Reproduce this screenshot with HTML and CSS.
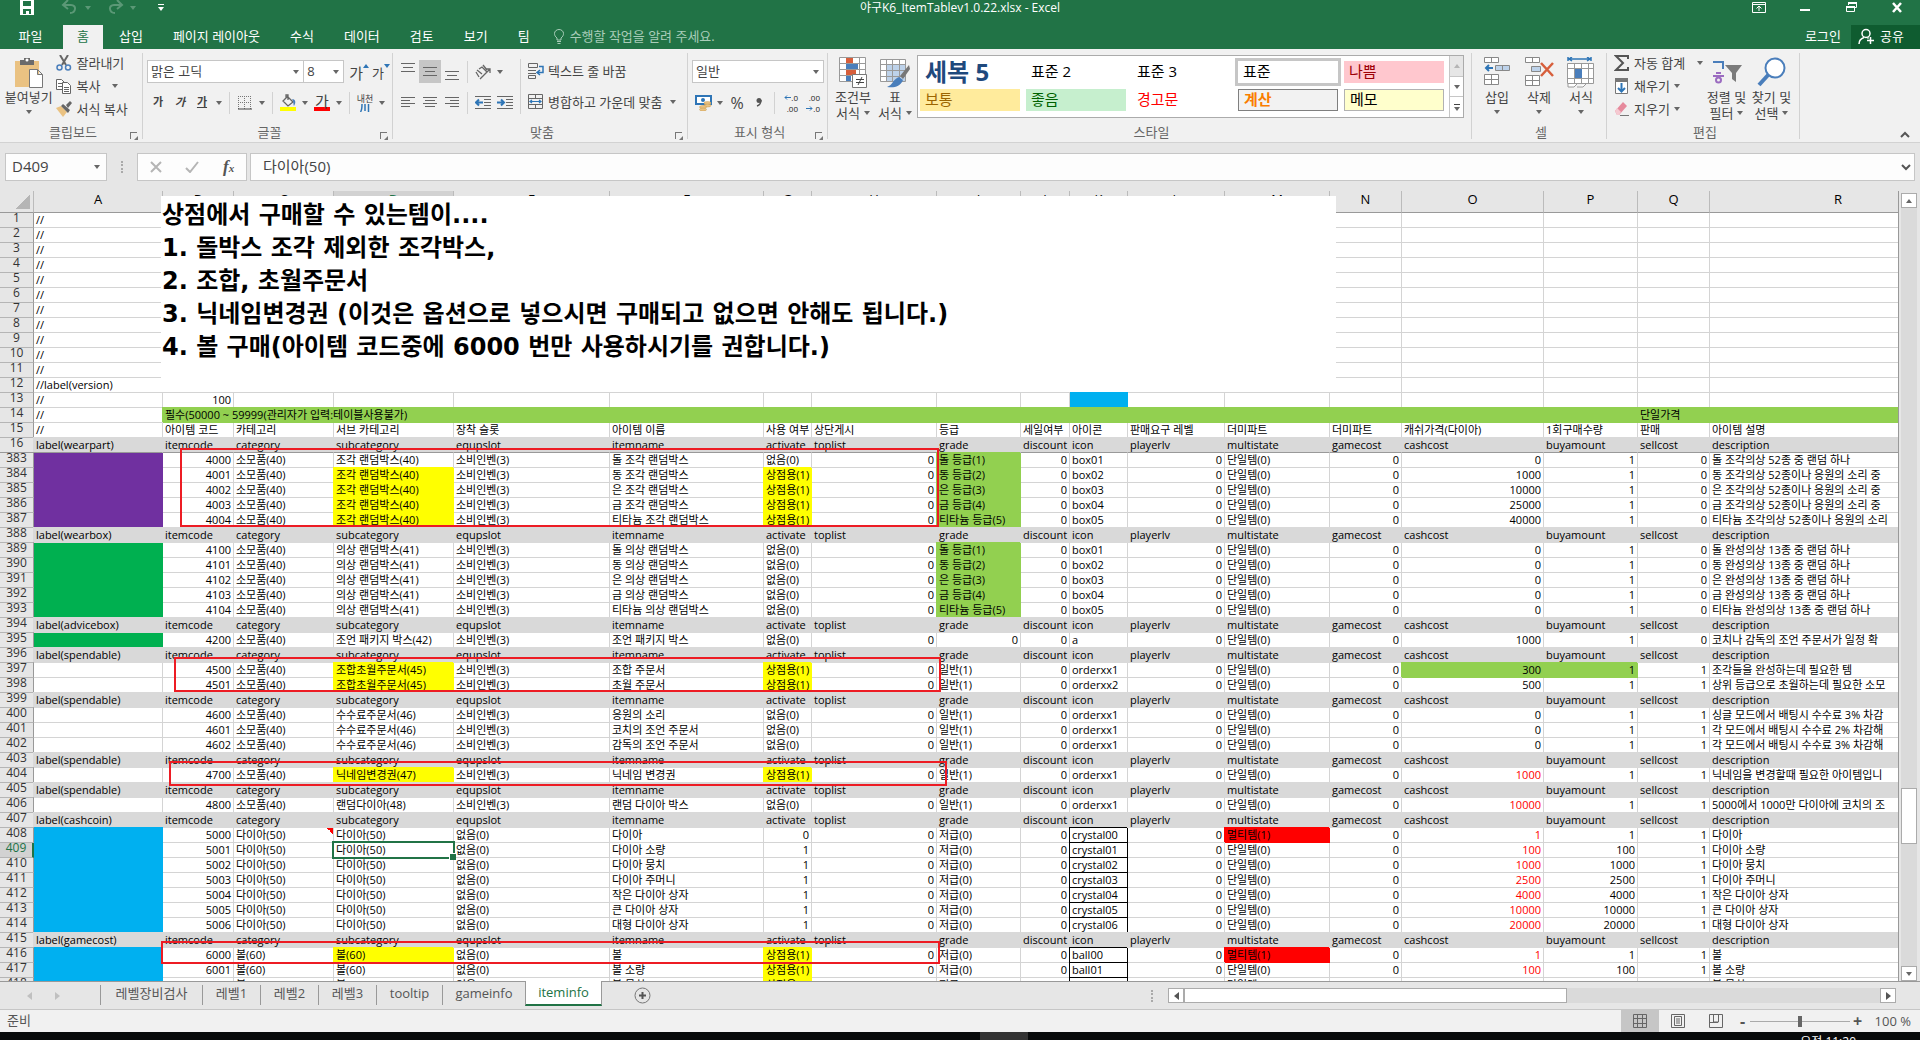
FILE: index.html
```html
<!DOCTYPE html>
<html lang="ko">
<head>
<meta charset="utf-8">
<title>야구K6_ItemTablev1.0.22.xlsx - Excel</title>
<link rel="stylesheet" href="styles.css">
</head>
<body>
<div class="app">
<header class="titlebar">
  <div class="quick">
    <button class="tb-btn" aria-label="저장"><svg width="16" height="16" viewBox="0 0 16 16"><path fill="#fff" d="M1 0h14v15H1z"/><path fill="#217346" d="M4 1h8v5H4zM4 9h8v5h-2v-3H7v3H4z"/></svg></button>
    <button class="tb-btn undo" aria-label="실행 취소"><svg width="18" height="16" viewBox="0 0 18 16" fill="none" stroke="#5b9876" stroke-width="2"><path d="M7 0L2 5l5 4M2 5h8c6 0 5 8-1 8"/></svg><span class="tri faint"></span></button>
    <button class="tb-btn undo" aria-label="다시 실행"><svg width="18" height="16" viewBox="0 0 18 16" fill="none" stroke="#5b9876" stroke-width="2"><path d="M11 0l5 5-5 4M16 5H8c-6 0-5 8 1 8"/></svg><span class="tri faint"></span></button>
    <button class="tb-btn custom" aria-label="빠른 실행 도구 모음 사용자 지정"><span class="bar"></span><span class="tri light"></span></button>
  </div>
  <div class="title">야구K6_ItemTablev1.0.22.xlsx - Excel</div>
  <div class="winbtns">
    <button class="tb-btn" aria-label="리본 표시 옵션"><svg width="14" height="12" viewBox="0 0 14 12" fill="none" stroke="#fff"><path d="M.5 1.500h13v10H.5zM.5 3.500h13M7 10V5M4.500 7.500L7 5l2.500 2.500"/></svg></button>
    <button class="tb-btn" aria-label="최소화"><svg width="14" height="12" viewBox="0 0 14 12"><path fill="#fff" d="M2 8h10v2H2z"/></svg></button>
    <button class="tb-btn" aria-label="이전 크기로 복원"><svg width="14" height="12" viewBox="0 0 14 12" fill="none" stroke="#fff"><path d="M4.500 4V1.500h8v5h-2M2.500 5.500h8v5h-8z"/><path stroke-width="2" d="M4 2h9M2 6h9"/></svg></button>
    <button class="tb-btn" aria-label="닫기"><svg width="14" height="12" viewBox="0 0 14 12" stroke="#fff" stroke-width="2.500"><path d="M3 2l8 9M11 2l-8 9"/></svg></button>
  </div>
</header>

<nav class="tabs">
  <button class="tab file">파일</button>
  <button class="tab active">홈</button>
  <button class="tab">삽입</button>
  <button class="tab">페이지 레이아웃</button>
  <button class="tab">수식</button>
  <button class="tab">데이터</button>
  <button class="tab">검토</button>
  <button class="tab">보기</button>
  <button class="tab">팀</button>
  <button class="tell"><svg width="10" height="15" viewBox="0 0 10 15" fill="none" stroke="#a9cdb9"><path d="M3 11V9C1 7.500.5 6 .5 4.500a4.500 4 0 0 1 9 0C9.500 6 9 7.500 7 9v2zM3 12.500h4M3.500 14.500h3"/></svg>수행할 작업을 알려 주세요.</button>
  <button class="login">로그인</button>
  <button class="share"><svg width="17" height="17" viewBox="0 0 17 17" fill="none" stroke="#fff" stroke-width="1.500"><circle cx="8" cy="5.500" r="4"/><path d="M1 16c0-4 2-5.500 5-6.500M9.500 9.500l1 1M12.500 9v7M9 12.500h7"/></svg>공유</button>
</nav>

<section class="ribbon">
  <div class="group g-clip">
    <div class="body">
      <button class="big paste"><svg width="30" height="31" viewBox="0 0 30 31"><path fill="#eac282" d="M1 4h24v26H1z"/><path fill="#6b6b6b" d="M6 3h4V1h6v2h4v5H6z"/><circle cx="13" cy="3" r="1.500" fill="#fff"/><path fill="#fff" stroke="#777" d="M15.500 12.500h8l5 5v13h-13zM23.500 12.500v5h5"/></svg><span>붙여넣기</span><span class="tri"></span></button>
      <div class="stack">
        <button class="line"><svg width="16" height="16" viewBox="0 0 16 16" fill="none" stroke-width="1.500"><path stroke="#666" stroke-width="2" d="M4 0l6 10M12 0L6 10"/><circle cx="3.500" cy="12.500" r="2.500" stroke="#4a7ebb"/><circle cx="12" cy="12.500" r="2.500" stroke="#4a7ebb"/></svg>잘라내기</button>
        <button class="line"><svg width="16" height="16" viewBox="0 0 16 16" fill="#fff" stroke="#666"><path d="M.5 1.500h5l3 3v7h-8zM2 5.500h4M2 8.500h4"/><path d="M6.500 4.500h5l3 3v8h-8zM8 9.500h5M8 11.500h5M8 13.500h5"/></svg>복사<span class="tri gap"></span></button>
        <button class="line"><svg width="16" height="16" viewBox="0 0 16 16"><path fill="#eac282" d="M0 7l5-2 6 6-4 5z"/><path fill="#666" d="M5 5l2-2 7 6-2 3zM10 4l4-4 2 2-4 5z"/></svg>서식 복사</button>
      </div>
    </div>
    <div class="caption">클립보드<button class="launch" aria-label="클립보드 설정"></button></div>
  </div>

  <div class="group g-font">
    <div class="body rows">
      <div class="row">
        <span class="pick font"><select aria-label="글꼴"><option>맑은 고딕</option></select></span>
        <span class="pick size"><select aria-label="글꼴 크기"><option>8</option></select></span>
        <button class="ic grow">가<svg width="6" height="4" viewBox="0 0 6 4"><path fill="#2e75b6" d="M0 4l3-4 3 4z"/></svg></button>
        <button class="ic shrink">가<svg width="6" height="4" viewBox="0 0 6 4"><path fill="#2e75b6" d="M0 0l3 4 3-4z"/></svg></button>
      </div>
      <div class="row">
        <button class="ic small"><b>가</b></button>
        <button class="ic small"><b><i>가</i></b></button>
        <button class="ic small"><b><u>가</u></b></button>
        <button class="ar" aria-label="밑줄 옵션"><span class="tri"></span></button><i class="sep"></i>
        <button class="ic" aria-label="테두리"><svg width="14" height="14" viewBox="0 0 14 14" fill="none" stroke="#777"><path stroke-dasharray="1 1" d="M.5 0v13M6.500 0v13M12.500 0v13M0 .5h13M0 6.500h13"/><path stroke="#444" d="M0 13h14"/></svg></button>
        <button class="ar" aria-label="테두리 옵션"><span class="tri"></span></button><i class="sep"></i>
        <button class="ic" aria-label="채우기 색"><svg width="17" height="17" viewBox="0 0 17 17"><path fill="none" stroke="#666" stroke-width="1.300" d="M7 2l6 6-5 4-5-5 5-5M6 5V1h2v5"/><path fill="#4a7ebb" d="M12 5c4 0 4 4 2 7-1-2 0-4-2-7z"/><path fill="#ff0" d="M0 13h16v4H0z"/></svg></button>
        <button class="ar" aria-label="채우기 색 옵션"><span class="tri"></span></button>
        <button class="ic fcolor">가</button>
        <button class="ar" aria-label="글꼴 색 옵션"><span class="tri"></span></button><i class="sep"></i>
        <button class="ic ruby"><span>내천</span><svg width="10" height="8" viewBox="0 0 10 8" stroke="#2e75b6" stroke-width="1.500" fill="none"><path d="M2 0c0 4 0 6-1.500 8M5 0v7M8.500 0v8"/></svg></button>
        <button class="ar" aria-label="윗주 옵션"><span class="tri"></span></button>
      </div>
    </div>
    <div class="caption">글꼴<button class="launch" aria-label="글꼴 설정"></button></div>
  </div>

  <div class="group g-align">
    <div class="body">
      <div class="rows">
        <div class="row">
          <button class="ic up" aria-label="위쪽 맞춤"><svg width="14" height="9" viewBox="0 0 14 9" stroke="#666"><path d="M0 .5h14M2 4.500h10M0 8.500h14"/></svg></button>
          <button class="ic on" aria-label="가운데 맞춤"><svg width="14" height="9" viewBox="0 0 14 9" stroke="#666"><path d="M0 .5h14M2 4.500h10M0 8.500h14"/></svg></button>
          <button class="ic down" aria-label="아래쪽 맞춤"><svg width="14" height="9" viewBox="0 0 14 9" stroke="#666"><path d="M0 .5h14M2 4.500h10M0 8.500h14"/></svg></button><i class="sep"></i>
          <button class="ic" aria-label="방향"><svg width="17" height="16" viewBox="0 0 17 16" fill="none" stroke="#666" stroke-width="1.300"><path d="M1 8l3 5M2 6l5 4M4 5l3-2 5 5M8 1l4 5M5 15L15 5M11 5h4v4"/></svg></button>
          <button class="ar" aria-label="방향 옵션"><span class="tri"></span></button>
        </div>
        <div class="row">
          <button class="ic" aria-label="왼쪽 맞춤"><svg width="14" height="11" viewBox="0 0 14 11" stroke="#666"><path d="M0 .5h14M0 3.500h9M0 6.500h14M0 9.500h9"/></svg></button>
          <button class="ic" aria-label="가로 가운데 맞춤"><svg width="14" height="11" viewBox="0 0 14 11" stroke="#666"><path d="M0 .5h14M2 3.500h10M0 6.500h14M2 9.500h10"/></svg></button>
          <button class="ic" aria-label="오른쪽 맞춤"><svg width="14" height="11" viewBox="0 0 14 11" stroke="#666"><path d="M0 .5h14M5 3.500h9M0 6.500h14M5 9.500h9"/></svg></button><i class="sep"></i>
          <button class="ic" aria-label="내어쓰기"><svg width="16" height="13" viewBox="0 0 16 13" fill="none" stroke="#666"><path d="M0 .5h16M9 3.500h7M9 6.500h7M9 9.500h7M0 12.500h16"/><path stroke="#2e75b6" stroke-width="2" d="M8 6.500H1M4 3.500l-3 3 3 3"/></svg></button>
          <button class="ic" aria-label="들여쓰기"><svg width="16" height="13" viewBox="0 0 16 13" fill="none" stroke="#666"><path d="M0 .5h16M9 3.500h7M9 6.500h7M9 9.500h7M0 12.500h16"/><path stroke="#2e75b6" stroke-width="2" d="M0 6.500h7M4 3.500l3 3-3 3"/></svg></button>
        </div>
      </div>
      <i class="sep tall"></i>
      <div class="rows">
        <div class="row"><button class="line"><svg width="16" height="16" viewBox="0 0 16 16" fill="none" stroke="#666"><path d="M.5.5h9v4h-9zM0 7.500h8M0 10.500h8M.5 12.500h7v3h-7z"/><path stroke="#2e75b6" stroke-width="1.500" d="M11 3.500h4v6h-5M12 7l-3 2.500 3 2.500"/></svg>텍스트 줄 바꿈</button></div>
        <div class="row"><button class="line"><svg width="16" height="16" viewBox="0 0 16 16" fill="none" stroke="#666"><path d="M.5.500h14v14H.5zM.5 4.500h14M.5 10.500h14M7.500 0v4M7.500 11v4"/><path stroke="#2e75b6" stroke-width="1.200" d="M2 7.500h11M4 6L2 7.500 4 9M11 6l2 1.500L11 9"/></svg>병합하고 가운데 맞춤<span class="tri near"></span></button></div>
      </div>
    </div>
    <div class="caption">맞춤<button class="launch" aria-label="맞춤 설정"></button></div>
  </div>

  <div class="group g-num">
    <div class="body rows">
      <div class="row"><span class="pick wide"><select aria-label="표시 형식"><option>일반</option></select></span></div>
      <div class="row">
        <button class="ic" aria-label="회계 표시 형식"><svg width="17" height="16" viewBox="0 0 17 16"><path fill="#fff" stroke="#2e75b6" stroke-width="2" d="M1 1h15v8H1z"/><circle cx="8" cy="5" r="2" fill="#2e75b6"/><g fill="#eac282" stroke="#c99a4c" stroke-width=".5"><ellipse cx="12.500" cy="8" rx="3.500" ry="1.500"/><ellipse cx="12.500" cy="10.500" rx="3.500" ry="1.500"/><ellipse cx="8" cy="12" rx="3.500" ry="1.500"/><ellipse cx="8" cy="14.500" rx="3.500" ry="1.500"/></g></svg></button>
        <button class="ar" aria-label="회계 옵션"><span class="tri"></span></button>
        <button class="ic pct">%</button>
        <button class="ic comma" aria-label="쉼표 스타일"><svg width="6" height="9" viewBox="0 0 6 9"><circle cx="3" cy="2.500" r="2.500" fill="#555"/><path d="M5 2c0 3-1 5-4 6" fill="none" stroke="#555" stroke-width="1.500"/></svg></button><i class="sep"></i>
        <button class="ic dec"><span><svg width="7" height="5" viewBox="0 0 7 5" fill="none" stroke="#2e75b6"><path d="M7 2.500H1M3 .5l-2 2 2 2"/></svg>.0</span><span>.00</span></button>
        <button class="ic dec"><span>.00</span><span><svg width="7" height="5" viewBox="0 0 7 5" fill="none" stroke="#2e75b6"><path d="M0 2.500h6M4 .5l2 2-2 2"/></svg>.0</span></button>
      </div>
    </div>
    <div class="caption">표시 형식<button class="launch" aria-label="표시 형식 설정"></button></div>
  </div>

  <div class="group g-style">
    <div class="body">
      <button class="big"><svg width="30" height="31" viewBox="0 0 30 31"><path fill="#fff" stroke="#999" d="M1.500.500h26v24h-26zM1.500 6.500h26M1.500 12.500h26M1.500 18.500h26M8.500 0v25M14.500 0v25M21.500 0v25"/><path fill="#d75f3c" d="M8 1h7v5H8zM8 13h10v5H8z"/><path fill="#4a7ebb" d="M8 7h12v5H8zM8 19h5v5H8z"/><path fill="#fff" stroke="#777" d="M14.500 17.500h14v13h-14z"/><path stroke="#444" d="M18 22.500h8M18 25.500h8M24 20l-4 8"/></svg><span>조건부</span><span>서식<span class="tri"></span></span></button>
      <button class="big"><svg width="30" height="31" viewBox="0 0 30 31"><path fill="#fff" stroke="#999" d="M.5 2.500h25v22H.5z"/><path fill="#bdd2ea" d="M7 8h18v16H7z"/><path fill="none" stroke="#999" d="M.5 7.500h25M.5 13.500h25M.5 19.500h25M6.500 3v21M12.500 3v21M19.500 3v21"/><path fill="#777" d="M29 8l-9 11 3 3 7-10z"/><path fill="#4a7ebb" d="M19 20l4 3c-3 7-9 8-16 7 6-2 6-8 12-10z"/></svg><span>표</span><span>서식<span class="tri"></span></span></button>
      <div class="gallery">
        <div class="styles">
          <button class="st s-big">세복 5</button><button class="st">표준 2</button><button class="st">표준 3</button><button class="st s-sel">표준</button><button class="st s-bad">나쁨</button>
          <button class="st s-neutral">보통</button><button class="st s-good">좋음</button><button class="st s-warn">경고문</button><button class="st s-calc">계산</button><button class="st s-memo">메모</button>
        </div>
        <div class="gscroll"><button class="off" aria-label="위로"><span class="tri rev"></span></button><button aria-label="아래로"><span class="tri"></span></button><button aria-label="자세히"><span class="bar"></span><span class="tri"></span></button></div>
      </div>
    </div>
    <div class="caption">스타일</div>
  </div>

  <div class="group g-cell">
    <div class="body">
      <button class="big"><svg width="28" height="31" viewBox="0 0 28 31" fill="#fff" stroke="#888"><path d="M1.500.500h14v5h-14zM8.500 0v6M1.500 17.500h14v10h-14zM8.500 17v11M1.500 22.500h14"/><path fill="#bdd2ea" d="M12.500 8.500h14v5h-14zM19.500 8v6"/><path fill="none" stroke="#2e75b6" stroke-width="2" d="M10 11H3M6 8l-3 3 3 3"/></svg><span>삽입</span><span class="tri"></span></button>
      <button class="big"><svg width="30" height="31" viewBox="0 0 30 31" fill="#fff" stroke="#888"><path d="M1.500.500h14v5h-14zM8.500 0v6M1.500 18.500h14v10h-14zM8.500 18v11M1.500 23.500h14"/><path fill="#bdd2ea" d="M7.500 9.500h9v5h-9z"/><path fill="none" stroke="#d75f3c" stroke-width="2.500" d="M17 6l12 13M29 6L17 19"/></svg><span>삭제</span><span class="tri"></span></button>
      <button class="big"><svg width="30" height="31" viewBox="0 0 30 31" fill="#fff" stroke="#999"><path fill="none" stroke="#2e75b6" stroke-width="1.500" d="M2 0v4M25 0v4M3 2h21M6 0L3 2l3 2M21 0l3 2-3 2"/><path d="M1.500 6.500h26v20h-26zM1.500 11.500h26M1.500 21.500h26M8.500 6v20M15.500 6v20M22.500 6v20M2 27v3h6l3-3M11 30h6l3-3"/><path fill="#4a7ebb" stroke="none" d="M9 12h7v9H9z"/></svg><span>서식</span><span class="tri"></span></button>
    </div>
    <div class="caption">셀</div>
  </div>

  <div class="group g-edit">
    <div class="body">
      <div class="stack">
        <button class="line"><svg width="16" height="16" viewBox="0 0 16 16" fill="none" stroke="#555" stroke-width="2"><path d="M14 4V1H2l7 7-7 7h12v-3"/></svg>자동 합계<span class="tri gap"></span></button>
        <button class="line"><svg width="16" height="16" viewBox="0 0 16 16"><path fill="#fff" stroke="#777" d="M1.500.500h12v15h-12z"/><path fill="#777" d="M1 0h13v4H1z"/><path fill="none" stroke="#2e75b6" stroke-width="2" d="M7.500 5v8M4 10l3.500 3.500L11 10"/></svg>채우기<span class="tri"></span></button>
        <button class="line"><svg width="16" height="16" viewBox="0 0 16 16"><path fill="#e68a9c" d="M1 10l8-9 4 4-8 9H3z"/><path fill="#f5c9d1" d="M1 10l2-3 4 4-2 3H3z"/><path stroke="#777" d="M6 14.500h9"/></svg>지우기<span class="tri"></span></button>
      </div>
      <button class="big sort"><svg width="32" height="31" viewBox="0 0 32 31" fill="none"><path stroke="#4a7ebb" stroke-width="2" d="M2 5h10v7"/><path stroke="#9b6cc0" stroke-width="2" d="M5 16h5M2 19h11"/><circle cx="7.500" cy="23" r="2.500" stroke="#9b6cc0" stroke-width="2"/><path fill="#7b7b7b" d="M14 8h17l-6 8v9l-4-3v-6z"/></svg><span>정렬 및</span><span>필터<span class="tri"></span></span></button>
      <button class="big sort"><svg width="30" height="31" viewBox="0 0 30 31"><path stroke="#4a7ebb" stroke-width="4" d="M2 28l10-11"/><circle cx="18" cy="11" r="9.500" fill="#fff" stroke="#4a7ebb" stroke-width="2"/></svg><span>찾기 및</span><span>선택<span class="tri"></span></span></button>
    </div>
    <div class="caption">편집</div>
  </div>
  <button class="collapse" aria-label="리본 메뉴 축소"><svg width="10" height="7" viewBox="0 0 10 7" fill="none" stroke="#555" stroke-width="2"><path d="M1 6l4-4 4 4"/></svg></button>
</section>

<section class="formula">
  <span class="namebox"><input aria-label="이름 상자" value="D409"><span class="tri"></span></span>
  <span class="dots"></span>
  <span class="fx">
    <button aria-label="취소"><svg width="12" height="12" viewBox="0 0 12 12" stroke="#b5b5b5" stroke-width="2"><path d="M1 1l10 10M11 1L1 11"/></svg></button>
    <button aria-label="입력"><svg width="14" height="12" viewBox="0 0 14 12" fill="none" stroke="#b5b5b5" stroke-width="2"><path d="M1 7l4 4 8-10"/></svg></button>
    <button class="fn">f<sub>x</sub></button>
  </span>
  <span class="fbox"><input aria-label="수식 입력줄" value="다이아(50)"><svg width="10" height="7" viewBox="0 0 10 7" fill="none" stroke="#555" stroke-width="2"><path d="M1 1l4 4 4-4"/></svg></span>
</section>

<main class="sheet">
  <div class="gridwrap">
    <table class="grid" id="grid"></table>
    <div class="memo">상점에서 구매할 수 있는템이....<br>1. 돌박스 조각 제외한 조각박스,<br>2. 조합, 초월주문서<br>3. 닉네임변경권 (이것은 옵션으로 넣으시면 구매되고 없으면 안해도 됩니다.)<br>4. 볼 구매(아이템 코드중에 6000 번만 사용하시기를 권합니다.)</div>
    <div class="mark m1"></div><div class="mark m2"></div><div class="mark m3"></div><div class="mark m4"></div>
  </div>
  <div class="vscroll">
    <button class="sb" aria-label="위로 스크롤"><span class="tri rev"></span></button>
    <div class="vtrack"><div class="vthumb"></div></div>
    <button class="sb" aria-label="아래로 스크롤"><span class="tri"></span></button>
  </div>
</main>

<footer class="sheets">
  <div class="navs"><span class="nav-l"></span><span class="nav-r"></span></div>
  <button class="stab w3">레벨장비검사</button><button class="stab">레벨1</button><button class="stab">레벨2</button><button class="stab">레벨3</button><button class="stab w1">tooltip</button><button class="stab w2">gameinfo</button><button class="stab cur">iteminfo</button>
  <button class="add" aria-label="새 시트"><svg width="17" height="17" viewBox="0 0 17 17" fill="none" stroke="#777"><circle cx="8.500" cy="8.500" r="7.500"/><path stroke="#555" stroke-width="2" d="M8.500 5v7M5 8.500h7"/></svg></button>
  <div class="hscroll">
    <span class="dots"></span>
    <button class="sb" aria-label="왼쪽으로 스크롤"><span class="tri lft"></span></button>
    <div class="htrack"><div class="hthumb"></div></div>
    <button class="sb" aria-label="오른쪽으로 스크롤"><span class="tri rgt"></span></button>
  </div>
</footer>

<footer class="status">
  <span class="ready">준비</span>
  <button class="view on" aria-label="기본"><svg width="14" height="14" viewBox="0 0 14 14" fill="none" stroke="#666"><path d="M.5.500h13v13H.5zM.5 4.500h13M.5 9.500h13M4.500 0v14M9.500 0v14"/></svg></button>
  <button class="view" aria-label="페이지 레이아웃"><svg width="14" height="14" viewBox="0 0 14 14" fill="none" stroke="#666"><path d="M.5.500h13v13H.5zM3.500 2.500h7v9h-7zM5 5h4M5 7h4M5 9h4"/></svg></button>
  <button class="view" aria-label="페이지 나누기"><svg width="14" height="14" viewBox="0 0 14 14" fill="none" stroke="#666"><path d="M.5.500h13v13H.5zM4.500 0v8h5V0M0 8.500h9"/></svg></button>
  <button class="zm">-</button>
  <input class="zoom" type="range" min="0" max="100" value="50" aria-label="확대/축소">
  <button class="zm">+</button>
  <span class="pctv">100 %</span>
</footer>
<div class="taskbar"><span class="task"></span><span class="clock">오전 11:20</span></div>
</div>
<script src="grid.js"></script>
</body>
</html>
```
FILE: styles.css
```css
* { box-sizing: border-box; }
body {
  margin: 0;
  font-family: "Open Sans", "Noto Sans CJK KR", sans-serif;
  font-size: 13px;
  line-height: 16px;
  color: #444;
}
button, input, select {
  font: inherit;
  color: inherit;
  margin: 0;
  padding: 0;
  border: 0;
  background: none;
  border-radius: 0;
  appearance: none;
  outline: 0;
  white-space: nowrap;
}
svg { display: block; flex: none; }
.app { display: flex; flex-direction: column; height: 100vh; overflow: hidden; }

.tri {
  display: inline-block;
  border: 3px solid transparent;
  border-top: 4px solid #666;
  border-bottom: 0;
  vertical-align: middle;
  flex: none;
}
.tri.rev { border-top: 0; border-bottom: 4px solid #666; }
.tri.lft { border: 4px solid transparent; border-right: 5px solid #555; border-left: 0; }
.tri.rgt { border: 4px solid transparent; border-left: 5px solid #555; border-right: 0; }
.tri.faint { border-top-color: #5b9876; }
.tri.light { border-top-color: #fff; }
.tri.gap { margin-left: 8px; }
.tri.near { margin-left: 4px; }

/* title bar */
.titlebar {
  display: grid;
  grid-template-columns: 1fr auto 1fr;
  height: 25px;
  background: #217346;
  color: #fff;
  flex: none;
}
.title { font-size: 12px; }
.quick, .winbtns { display: flex; align-items: flex-start; }
.quick { padding-left: 19px; }
.winbtns { justify-content: flex-end; gap: 32px; padding: 1px 16px 0 0; }
.tb-btn { display: flex; align-items: center; }
.undo { margin-left: 26px; gap: 6px; width: 33px; }
.undo + .undo { margin-left: 12px; }
.custom { flex-direction: column; gap: 2px; margin: 4px 0 0 19px; }
.bar { width: 6px; height: 1px; background: currentColor; }

/* ribbon tabs */
.tabs { display: flex; gap: 2px; height: 24px; background: #217346; color: #fff; flex: none; }
.tab { padding: 0 14px 2px; }
.tab.file { width: 61px; }
.tab.active { background: #f1f1f1; color: #217346; }
.tell { display: flex; align-items: center; gap: 6px; margin-left: 8px; padding-bottom: 2px; color: #a9cdb9; }
.login { margin-left: auto; padding: 0 8px 2px; }
.share { display: flex; align-items: center; gap: 5px; width: 69px; padding: 0 0 2px 7px; background: #0f5c30; }

/* ribbon */
.ribbon { display: flex; height: 94px; padding-top: 4px; background: #f1f1f1; border-bottom: 1px solid #d2d2d2; flex: none; }
.group { display: flex; flex-direction: column; height: 86px; border-right: 1px solid #d2d2d2; padding-left: 4px; flex: none; }
.body { display: flex; height: 70px; }
.caption { position: relative; height: 16px; line-height: 18px; text-align: center; color: #666; }
.launch { position: absolute; right: 5px; bottom: 0; width: 7px; height: 7px; border: 1px solid #777; border-width: 1px 0 0 1px; }
.launch::after { content: ""; position: absolute; left: 3px; top: 3px; border: 2px solid #777; border-top-color: transparent; border-left-color: transparent; }
.g-clip { width: 143px; }
.g-font { width: 250px; }
.g-align { width: 295px; }
.g-num { width: 140px; }
.g-style { width: 644px; }
.g-cell { width: 135px; }
.g-edit { width: 193px; }
.big { display: flex; flex-direction: column; align-items: center; justify-content: flex-start; width: 42px; padding-top: 4px; }
.big svg { margin-bottom: 1px; }
.big > span { display: flex; align-items: center; gap: 4px; }
.big > .tri { margin-top: 5px; }
.paste { width: 52px; }
.sort { width: 45px; }
.stack { display: flex; flex-direction: column; width: 93px; margin-top: -2px; }
.line { display: flex; align-items: center; gap: 4px; height: 23px; padding-left: 3px; }
.rows { display: flex; flex-direction: column; gap: 8px; padding-top: 7px; }
.rows .line { padding-bottom: 2px; }
.row { display: flex; height: 23px; align-items: center; }
.ic { display: flex; align-items: center; justify-content: center; width: 22px; height: 23px; }
.ic.small { font-size: 11px; padding-bottom: 1px; }
.ic.on { background: #c6c6c6; }
.ic.up { align-items: flex-start; padding-top: 3px; }
.ic.down { align-items: flex-end; padding-bottom: 3px; }
.ar { display: flex; align-items: center; justify-content: center; width: 12px; height: 23px; }
.sep { width: 1px; height: 22px; margin: 0 4px; background: #d2d2d2; flex: none; }
.sep.tall { height: 55px; margin-top: 6px; }
.grow { font-size: 15px; align-items: flex-start; padding-top: 5px; margin-left: 4px; }
.shrink { font-size: 13px; align-items: flex-start; padding-top: 5px; }
.grow svg, .shrink svg { margin-top: -1px; }
.fcolor { font-size: 15px; line-height: 14px; height: 17px; width: 16px; margin: 0 3px; border-bottom: 4px solid #f00; }
.ruby { flex-direction: column; font-size: 9px; line-height: 10px; }
.pct { font-size: 16px; }
.dec { flex-direction: column; align-items: flex-end; padding-right: 3px; font-size: 8px; line-height: 11px; color: #222; }
.dec span { display: flex; align-items: center; }
.pick { position: relative; display: block; height: 23px; border: 1px solid #c6c6c6; background: #fff; }
.pick select { width: 100%; height: 19px; padding-left: 3px; }
.pick::after { content: ""; position: absolute; right: 4px; top: 9px; border: 3px solid transparent; border-top: 4px solid #666; border-bottom: 0; pointer-events: none; }
.font { width: 158px; }
.size { width: 40px; border-left: 0; }
.wide { width: 132px; }

.gallery { display: flex; width: 547px; height: 63px; margin: 2px 0 0 1px; background: #fff; border: 1px solid #ababab; }
.styles { display: grid; grid-template-columns: repeat(5, 100px); grid-auto-rows: 22px; gap: 6px; padding: 5px 2px; width: 531px; }
.st { padding: 0 0 3px 5px; text-align: left; font-size: 15px; line-height: 18px; color: #000; }
.s-big { padding-bottom: 8px; font-size: 24px; font-weight: bold; line-height: 22px; color: #1f497d; }
.s-sel { box-shadow: 0 0 0 3px #c6c6c6; }
.s-bad { background: #ffc7ce; color: #9c0006; }
.s-neutral { background: #ffeb9c; color: #9c6500; }
.s-good { background: #c6efce; color: #006100; }
.s-warn { color: #f00; }
.s-calc { background: #f2f2f2; border: 1px solid #7f7f7f; color: #fa7d00; font-weight: bold; }
.s-memo { background: #ffc; border: 1px solid #b2b2b2; }
.gscroll { display: flex; flex-direction: column; width: 14px; border-left: 1px solid #c6c6c6; }
.gscroll button { display: flex; flex-direction: column; gap: 2px; flex: 1; align-items: center; justify-content: center; border-bottom: 1px solid #c6c6c6; }
.gscroll button:last-child { border-bottom: 0; }
.gscroll .off { background: #e6e6e6; }
.gscroll .off .tri { border-bottom-color: #b5b5b5; }
.collapse { margin: auto 10px 4px auto; }

/* formula bar */
.formula { display: flex; height: 48px; padding: 10px 5px; background: #e6e6e6; flex: none; }
.namebox, .fx, .fbox { display: flex; align-items: center; background: #fdfdfd; border: 1px solid #c6c6c6; font-size: 15px; }
.namebox { width: 102px; padding: 0 6px; }
.namebox input { width: 100%; height: 20px; margin-bottom: 2px; }
.dots { width: 2px; height: 12px; border-left: 2px dotted #aaa; align-self: center; }
.formula .dots { margin: 0 14px; }
.fx { width: 110px; justify-content: space-around; }
.fn { font: italic bold 17px/18px "Liberation Serif", serif; color: #555; }
.fn sub { font-size: 11px; line-height: 10px; vertical-align: baseline; }
.fbox { flex: 1; margin-left: 3px; padding: 0 3px 0 12px; }
.fbox input { flex: 1; height: 20px; margin-bottom: 3px; }

/* worksheet */
.sheet { display: flex; flex: 1; min-height: 0; background: #e6e6e6; border-bottom: 1px solid #999; overflow: hidden; }
.gridwrap { position: relative; flex: 1; min-width: 0; overflow: hidden; border-right: 1px solid #999; }
.grid { width: calc(100% + 68px); table-layout: fixed; border-collapse: separate; border-spacing: 0; background: #fff; font-size: 11px; line-height: 14px; color: #000; }
.grid td, .grid th { height: 15px; padding: 0 2px; overflow: hidden; white-space: nowrap; text-align: left; border-right: 1px solid #d4d4d4; border-bottom: 1px solid #d4d4d4; font-weight: normal; }
.grid thead th { height: 22px; padding: 0 0 5px; text-align: center; font-size: 13px; line-height: 16px; background: #e6e6e6; border-color: #bbb; border-bottom-color: #999; }
.grid thead th:last-child, .grid td:last-child { border-right: 0; }
.grid thead .sel { background: #d2d2d2; color: #217346; }
.grid thead .corner { vertical-align: bottom; padding: 0 3px 3px; border-right-color: #bbb; }
.corner i { display: block; width: 14px; height: 14px; margin-left: auto; background: linear-gradient(135deg, transparent 50%, #b5b5b5 50%); }
.grid tbody th { padding: 0 0 4px; overflow: visible; text-align: center; font-size: 12px; line-height: 10px; background: #e6e6e6; color: #333; border-color: #b5b5b5; border-right-color: #999; }
.grid tbody th.sel { background: #d2d2d2; color: #217346; border-right: 2px solid #217346; }
.grid .n { text-align: right; }
.grid .spill { overflow: visible; }
.grid td.hd { background: #d9d9d9; border-color: #d9d9d9; box-shadow: -1px -1px #d9d9d9; }
.grid td.gr { background: #92d050; border-color: #92d050; box-shadow: -1px -1px #92d050; }
.grid td.ye { background: #ff0; border-color: #ff0; box-shadow: -1px -1px #ff0; }
.grid td.re { background: #f00; border-color: #f00; box-shadow: -1px -1px #f00; }
.grid td.pu { background: #7030a0; border-color: #7030a0; }
.grid td.dg { background: #00b050; border-color: #00b050; }
.grid td.bl { background: #00b0f0; border-color: #00b0f0; box-shadow: 0 -1px #00b0f0; }
.grid td.bx { border-color: #000; box-shadow: -1px -1px #000; }
.grid .rt { color: #f00; }
.grid .frozen th, .grid .frozen td { border-bottom-color: #999; }
.grid .note { background: linear-gradient(45deg, transparent 50%, #f00 50%) right top / 6px 6px no-repeat; }
.grid td.cursor { position: relative; overflow: visible; }
.cursor::before { content: ""; position: absolute; inset: -2px; border: 2px solid #217346; }
.cursor::after { content: ""; position: absolute; right: -3px; bottom: -3px; width: 6px; height: 6px; background: #217346; border: 1px solid #fff; border-width: 1px 0 0 1px; }

.memo { position: absolute; left: 161px; top: 5px; width: 1175px; height: 196px; padding: 3px 1px; background: #fff; font: bold 24px/33px "DejaVu Sans", "Noto Sans CJK KR", sans-serif; color: #000; white-space: nowrap; }
.mark { position: absolute; border: 2px solid #ed1c24; }
.m1 { left: 180px; top: 257px; width: 759px; height: 79px; }
.m2 { left: 174px; top: 466px; width: 767px; height: 35px; }
.m3 { left: 169px; top: 570px; width: 778px; height: 25px; }
.m4 { left: 161px; top: 750px; width: 779px; height: 23px; }

.vscroll { display: flex; flex-direction: column; width: 21px; padding: 2px 3px 0 2px; }
.sb { display: flex; align-items: center; justify-content: center; width: 16px; height: 15px; background: #fff; border: 1px solid #ababab; flex: none; }
.vtrack { flex: 1; background: #dadada; display: flex; flex-direction: column; }
.vtrack::before { content: ""; flex: 582; }
.vtrack::after { content: ""; flex: 122; }
.vthumb { flex: 55; background: #fff; border: 1px solid #ababab; }

/* sheet tabs */
.sheets { display: flex; height: 28px; background: #e6e6e6; border-bottom: 1px solid #c6c6c6; flex: none; }
.navs { display: flex; align-items: center; gap: 23px; width: 100px; padding-left: 27px; }
.nav-l, .nav-r { border: 4px solid transparent; }
.nav-l { border-right: 5px solid #c0c0c0; border-left: 0; }
.nav-r { border-left: 5px solid #c0c0c0; border-right: 0; }
.stab { width: 58px; height: 20px; margin-top: 3px; padding-bottom: 4px; border-left: 1px solid #999; color: #555; flex: none; }
.w1 { width: 66px; }
.w2 { width: 83px; }
.w3 { width: 102px; }
.stab.cur { width: 77px; height: 25px; margin-top: -1px; padding: 0 0 1px; background: #fff; color: #217346; border: 1px solid #999; border-width: 0 1px 2px; border-bottom-color: #217346; }
.add { margin-left: 32px; }
.hscroll { display: flex; align-items: center; width: 745px; margin-left: auto; margin-right: 24px; }
.hscroll .dots { margin-right: 15px; }
.htrack { display: flex; flex: 1; height: 15px; background: #dadada; }
.hthumb { width: 55%; background: #fff; border: 1px solid #ababab; }

/* status bar */
.status { display: flex; align-items: center; height: 22px; padding: 0 9px 0 7px; background: #f1f1f1; flex: none; color: #555; }
.ready { margin-right: auto; padding-bottom: 2px; }
.view { display: flex; align-items: center; justify-content: center; width: 38px; height: 22px; }
.view.on { background: #c6c6c6; }
.zm { width: 15px; font-size: 16px; font-weight: bold; }
.zoom { width: 100px; height: 12px; background: linear-gradient(#aaa, #aaa) center / 100% 1px no-repeat; }
.zoom::-webkit-slider-thumb { appearance: none; width: 4px; height: 11px; background: #666; }
.pctv { width: 46px; text-align: right; font-size: 13px; }

.taskbar { display: flex; height: 8px; background: #080a0b; overflow: hidden; flex: none; color: #fff; font-size: 12px; }
.task { width: 48px; height: 8px; margin-left: 980px; background: #333; }
.clock { margin: 2px 64px 0 auto; }
```
FILE: grid.js
```js
// Cell text may start with a style code and a colon, e.g. "ye:text".
const letters = "ABCDEFGHIJKLMNOPQR".split("");
const widths = [34, 129, 71, 100, 120, 156, 154, 48, 125, 84, 49, 58, 97, 105, 72, 142, 94, 72];
const labels = "itemcode|category|subcategory|equpslot|itemname|activate|toplist|grade|discount|icon|playerlv|multistate|gamecost|cashcost|buyamount|sellcost|description";
const head = (n, name) => n + "|label(" + name + ")|" + labels;
const item = (n, fill, code, cat, sub, slot, name, act, grade, icon, multi, cash, buy, sell, desc) =>
  [n, fill, code, cat, sub, slot, name, act, 0, grade, 0, icon, 0, multi, 0, cash, buy, sell, desc].join("|");
const S = "소모품(40)", V = "소비인벤(3)", N = "없음(0)", Y = "ye:상점용(1)", ONE = "단일템(0)", LOW = "저급(0)", GEN = "일반(1)";

const rows = [];
for (let i = 1; i <= 11; i++) rows.push(i + "|//" + "|".repeat(17));
rows.push("12|//label(version)" + "|".repeat(17));
rows.push("13|//|100|||||||||bl:|||||||");
rows.push("14|//|gr spill:필수(50000 ~ 59999(관리자가 입력:테이블사용불가)" + "|gr:".repeat(14) + "|gr:단일가격|gr:");
rows.push("15|//|아이템 코드|카테고리|서브 카테고리|장착 슬롯|아이템 이름|사용 여부|상단게시|등급|세일여부|아이콘|판매요구 레벨|더미파트|더미파트|캐쉬가격(다이아)|1회구매수량|판매|아이템 설명");
rows.push(head(16, "wearpart"));

const kinds = ["돌", "동", "은", "금", "티타늄"];
const sounds = ["돌 조각의상 52종 중 랜덤 하나", "동 조각의상 52종이나 응원의 소리 중", "은 조각의상 52종이나 응원의 소리 중", "금 조각의상 52종이나 응원의 소리 중", "티타늄 조각의상 52종이나 응원의 소리"];
const price = [0, 1000, 10000, 25000, 40000];
kinds.forEach((k, i) => rows.push(item(383 + i, "pu:", 4000 + i, S, (i ? "ye:" : "") + "조각 랜덤박스(40)", V, k + " 조각 랜덤박스", i ? Y : N, "gr:" + k + " 등급(" + (i + 1) + ")", "box0" + (i + 1), ONE, price[i], 1, 0, sounds[i])));
rows.push(head(388, "wearbox"));
kinds.forEach((k, i) => rows.push(item(389 + i, "dg:", 4100 + i, S, "의상 랜덤박스(41)", V, k + " 의상 랜덤박스", N, "gr:" + k + " 등급(" + (i + 1) + ")", "box0" + (i + 1), ONE, 0, 1, 0, k + " 완성의상 13종 중 랜덤 하나")));
rows.push(head(394, "advicebox"));
rows.push(item(395, "dg:", 4200, S, "조언 패키지 박스(42)", V, "조언 패키지 박스", N, 0, "a", ONE, 1000, 1, 0, "코치나 감독의 조언 주문서가 일정 확"));
rows.push(head(396, "spendable"));
rows.push(item(397, "", 4500, S, "ye:조합초월주문서(45)", V, "조합 주문서", Y, GEN, "orderxx1", ONE, "gr:300", "gr:1", 1, "조각들을 완성하는데 필요한 템"));
rows.push(item(398, "", 4501, S, "ye:조합초월주문서(45)", V, "초월 주문서", Y, GEN, "orderxx2", ONE, 500, 1, 1, "상위 등급으로 초월하는데 필요한 소모"));
rows.push(head(399, "spendable"));
[["응원의 소리", "싱글 모드에서 배팅시 수수료 3% 차감"], ["코치의 조언 주문서", "각 모드에서 배팅시 수수료 2% 차감해"], ["감독의 조언 주문서", "각 모드에서 배팅시 수수료 3% 차감해"]]
  .forEach((r, i) => rows.push(item(400 + i, "", 4600 + i, S, "수수료주문서(46)", V, r[0], N, GEN, "orderxx1", ONE, 0, 1, 1, r[1])));
rows.push(head(403, "spendable"));
rows.push(item(404, "", 4700, S, "ye:닉네임변경권(47)", V, "닉네임 변경권", Y, GEN, "orderxx1", ONE, "rt:1000", 1, 1, "닉네임을 변경할때 필요한 아이템입니"));
rows.push(head(405, "spendable"));
rows.push(item(406, "", 4800, S, "랜덤다이아(48)", V, "랜덤 다이아 박스", N, GEN, "orderxx1", ONE, "rt:10000", 1, 1, "5000에서 1000만 다이아에 코치의 조"));
rows.push(head(407, "cashcoin"));
const gem = ["다이아", "다이아 소량", "다이아 뭉치", "다이아 주머니", "작은 다이아 상자", "큰 다이아 상자", "대형 다이아 상자"];
const amount = [1, 100, 1000, 2500, 4000, 10000, 20000];
gem.forEach((g, i) => rows.push(item(408 + i, "bl:", 5000 + i, (i ? "" : "note:") + "다이아(50)", (i === 1 ? "cursor:" : "") + "다이아(50)", N, g, i ? 1 : 0, LOW, "bx:crystal0" + i, i ? ONE : "re:멀티템(1)", "rt:" + amount[i], amount[i], 1, g)));
rows.push(head(415, "gamecost"));
["볼", "볼 소량", "볼 뭉치"].forEach((g, i) => rows.push(item(416 + i, "bl:", 6000 + i, "볼(60)", (i ? "" : "ye:") + "볼(60)", N, g, Y, LOW, "bx:ball0" + i, i ? ONE : "re:멀티템(1)", "rt:" + amount[i], amount[i], 1, g)));

const cell = (text) => {
  const m = /^((?:[a-z]{2}|note|cursor)(?: spill)?):(.*)$/.exec(text);
  const cls = m ? [m[1]] : [];
  const value = m ? m[2] : text;
  if (/^\d+$/.test(value)) cls.push("n");
  return [cls, value];
};
const body = rows.map((line) => {
  const parts = line.split("|");
  const num = parts.shift();
  const isHead = /^label/.test(parts[0]);
  const tds = parts.map((p) => {
    const [cls, value] = cell(p);
    if (isHead) cls.push("hd");
    return `<td class="${cls.join(" ")}">${value}</td>`;
  }).join("");
  return `<tr class="${num === "16" ? "frozen" : ""}"><th scope="row" class="${num === "409" ? "sel" : ""}">${num}</th>${tds}</tr>`;
}).join("");
document.getElementById("grid").innerHTML =
  "<colgroup>" + widths.map((w) => `<col style="width:${w}px">`).join("") + "<col></colgroup>" +
  '<thead><tr><th class="corner"><i></i></th>' + letters.map((l) => `<th scope="col" class="${l === "D" ? "sel" : ""}">${l}</th>`).join("") + "</tr></thead>" +
  "<tbody>" + body + "</tbody>";
```
